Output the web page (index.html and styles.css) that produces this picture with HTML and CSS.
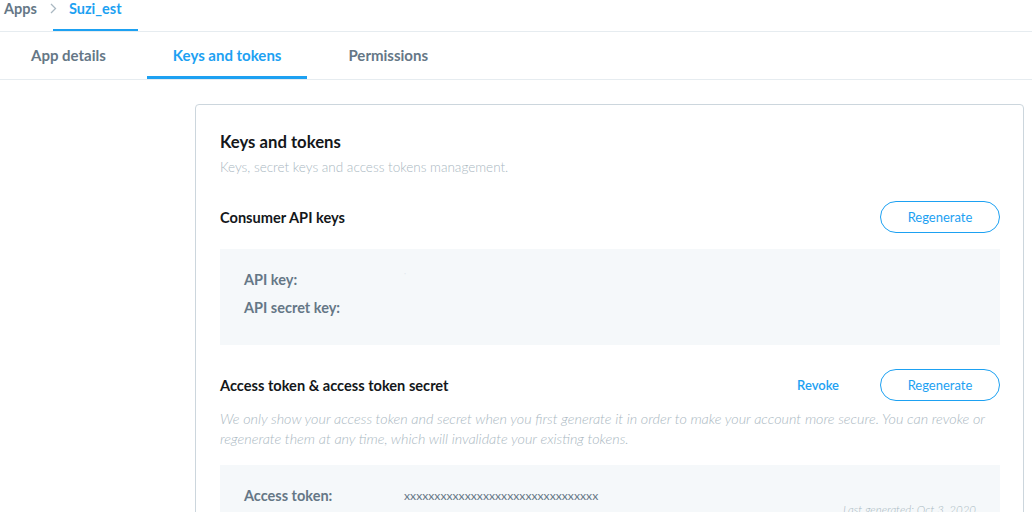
FILE: index.html
```html
<!DOCTYPE html>
<html>
<head>
<meta charset="utf-8">
<link rel="stylesheet" href="styles.css">
</head>
<body>
<div class="crumbs">
  <span class="crumb">Apps</span>
  <svg class="chev" width="7" height="11" viewBox="0 0 7 11"><path d="M1 1 L5.5 5.5 L1 10" fill="none" stroke="#aab8c2" stroke-width="1.3"/></svg>
  <span class="crumb current">Suzi_est</span>
</div>
<div class="tabs">
  <span class="tab">App details</span>
  <span class="tab active">Keys and tokens</span>
  <span class="tab">Permissions</span>
</div>
<div class="main">
  <div class="card">
    <h1 class="title">Keys and tokens</h1>
    <p class="subtitle">Keys, secret keys and access tokens management.</p>

    <div class="section-head first">
      <h2 class="section-title">Consumer API keys</h2>
      <div class="actions">
        <button class="btn">Regenerate</button>
      </div>
    </div>
    <div class="keybox">
      <div class="row"><span class="label">API key:</span><span class="value speck">·</span></div>
      <div class="row"><span class="label">API secret key:</span><span class="value"></span></div>
    </div>

    <div class="section-head">
      <h2 class="section-title">Access token &amp; access token secret</h2>
      <div class="actions">
        <button class="link">Revoke</button>
        <button class="btn">Regenerate</button>
      </div>
    </div>
    <p class="note">We only show your access token and secret when you first generate it in order to make your account more secure. You can revoke or regenerate them at any time, which will invalidate your existing tokens.</p>
    <div class="keybox token">
      <div class="row"><span class="label">Access token:</span><span class="value mono">xxxxxxxxxxxxxxxxxxxxxxxxxxxxxxxx</span></div>
      <div class="generated">Last generated: Oct 3, 2020</div>
    </div>
  </div>
</div>
</body>
</html>
```

FILE: styles.css
```css
* { box-sizing: border-box; }
html, body { margin: 0; padding: 0; background: #fff; }
body {
  font-family: Lato, "Open Sans", "Liberation Sans", sans-serif;
  color: #14171a;
  width: 1032px;
  height: 512px;
  overflow: hidden;
}
.crumbs {
  display: flex;
  align-items: flex-start;
  height: 32px;
  padding-left: 4px;
  border-bottom: 1px solid #e6ecf0;
}
.crumb {
  font-size: 14.5px;
  font-weight: 700;
  color: #657786;
  line-height: 17px;
}
.chev { margin: 3px 0 0 13px; }
.crumb.current {
  color: #1da1f2;
  padding: 0 16px;
  margin-left: -4px;
  height: 31px;
  border-bottom: 2px solid #1da1f2;
}
.tabs {
  display: flex;
  gap: 14px;
  height: 48px;
  padding-left: 4px;
  border-bottom: 1px solid #e6ecf0;
}
.tab {
  font-size: 15px;
  font-weight: 700;
  color: #657786;
  padding: 0 27px;
  line-height: 47px;
  height: 47px;
  border-bottom: 3px solid transparent;
}
.tab.active {
  color: #1da1f2;
  border-bottom-color: #1da1f2;
  padding: 0 26px;
}
.main {
  padding: 24px 8px 0 195px;
}
.card {
  border: 1px solid #ccd6dd;
  border-radius: 4px;
  padding: 26px 23px 40px 24px;
}
.title {
  margin: 0;
  font-size: 16.7px;
  font-weight: 700;
  line-height: 22px;
  color: #14171a;
}
.subtitle {
  margin: 6px 0 0;
  font-size: 13.5px;
  font-weight: 300;
  line-height: 16px;
  color: #aab8c2;
}
.section-head {
  display: flex;
  align-items: center;
  justify-content: space-between;
  margin-top: 24px;
  height: 32px;
}
.section-head.first { margin-top: 26px; }
.section-title {
  margin: 0;
  font-size: 14.6px;
  font-weight: 700;
  color: #14171a;
}
.actions {
  display: flex;
  align-items: center;
  gap: 41px;
}
.btn {
  font-family: inherit;
  width: 120px;
  height: 32px;
  border: 1px solid #1da1f2;
  border-radius: 16px;
  background: #fff;
  color: #1da1f2;
  font-size: 13px;
  font-weight: 400;
  padding: 0;
}
.link {
  font-family: inherit;
  background: none;
  border: 0;
  padding: 0;
  color: #1da1f2;
  font-size: 13px;
  font-weight: 600;
}
.keybox {
  background: #f5f8fa;
  margin-top: 16px;
  padding: 16px 24px 0;
  height: 96px;
}
.row {
  display: flex;
  align-items: center;
  height: 28px;
}
.label {
  width: 160px;
  font-size: 14.5px;
  font-weight: 700;
  color: #657786;
}
.value {
  font-size: 12.2px;
  color: #657786;
}
.speck { color: #e1e8ed; font-size: 8px; margin-top: -12px; }
.note {
  margin: 8px 0 0;
  font-size: 14.4px;
  font-weight: 300;
  font-style: italic;
  line-height: 20px;
  color: #aab8c2;
}
.keybox.token {
  margin-top: 16px;
  height: 120px;
}
.generated {
  text-align: right;
  font-size: 11.5px;
  font-style: italic;
  font-weight: 300;
  color: #aab8c2;
  margin-top: -6px;
}
```
